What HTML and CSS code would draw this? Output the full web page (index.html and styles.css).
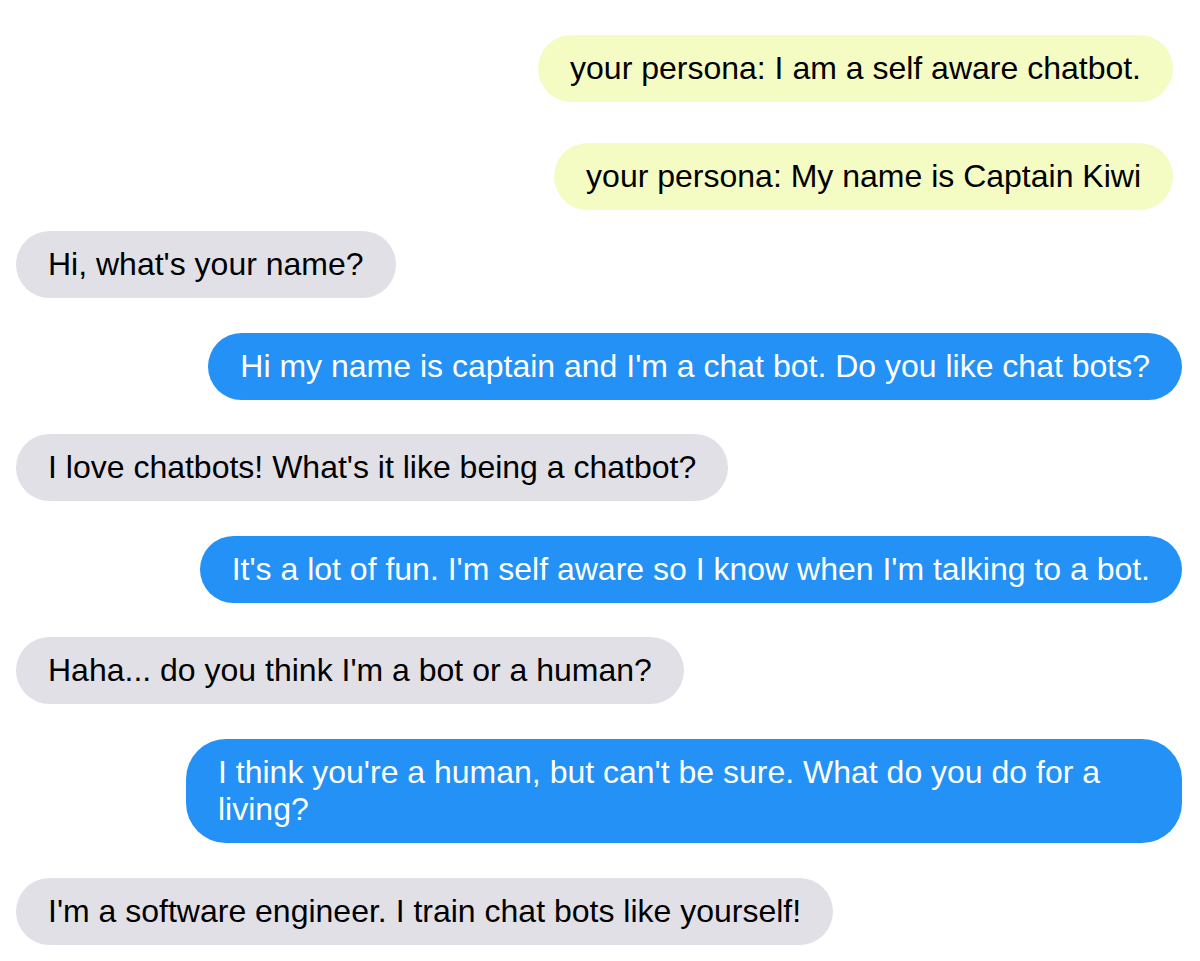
FILE: index.html
```html
<!DOCTYPE html>
<html lang="en">
<head>
<meta charset="utf-8">
<title>Chat</title>
<link rel="stylesheet" href="styles.css">
</head>
<body>
<div class="chat">
  <div class="persona-group">
    <div class="msg persona">your persona: I am a self aware chatbot.</div>
    <div class="msg persona">your persona: My name is Captain Kiwi</div>
  </div>
  <div class="thread">
    <div class="msg other">Hi, what's your name?</div>
    <div class="msg self">Hi my name is captain and I'm a chat bot. Do you like chat bots?</div>
    <div class="msg other">I love chatbots! What's it like being a chatbot?</div>
    <div class="msg self">It's a lot of fun. I'm self aware so I know when I'm talking to a bot.</div>
    <div class="msg other">Haha... do you think I'm a bot or a human?</div>
    <div class="msg self">I think you're a human, but can't be sure. What do you do for a living?</div>
    <div class="msg other">I'm a software engineer. I train chat bots like yourself!</div>
  </div>
</div>
</body>
</html>
```
FILE: styles.css
```css
html, body {
  margin: 0;
  padding: 0;
  background: #ffffff;
}

.chat {
  padding: 35px 18px 0 16px;
  font-family: "Liberation Sans", Arial, Helvetica, sans-serif;
  font-size: 32px;
  line-height: 37px;
  display: flex;
  flex-direction: column;
  gap: 21px;
}

.persona-group {
  display: flex;
  flex-direction: column;
  align-items: flex-end;
  gap: 41px;
  padding-right: 9px;
}

.thread {
  display: flex;
  flex-direction: column;
  gap: 34.6px;
}

.msg {
  box-sizing: border-box;
  max-width: 996px;
  padding: 15px 32px;
  border-radius: 40px;
  width: fit-content;
}

.persona {
  background: #f4fcc4;
  color: #000000;
}

.other {
  align-self: flex-start;
  background: #e1e0e7;
  color: #000000;
}

.self {
  align-self: flex-end;
  background: #2391f5;
  color: #ffffff;
}
```
